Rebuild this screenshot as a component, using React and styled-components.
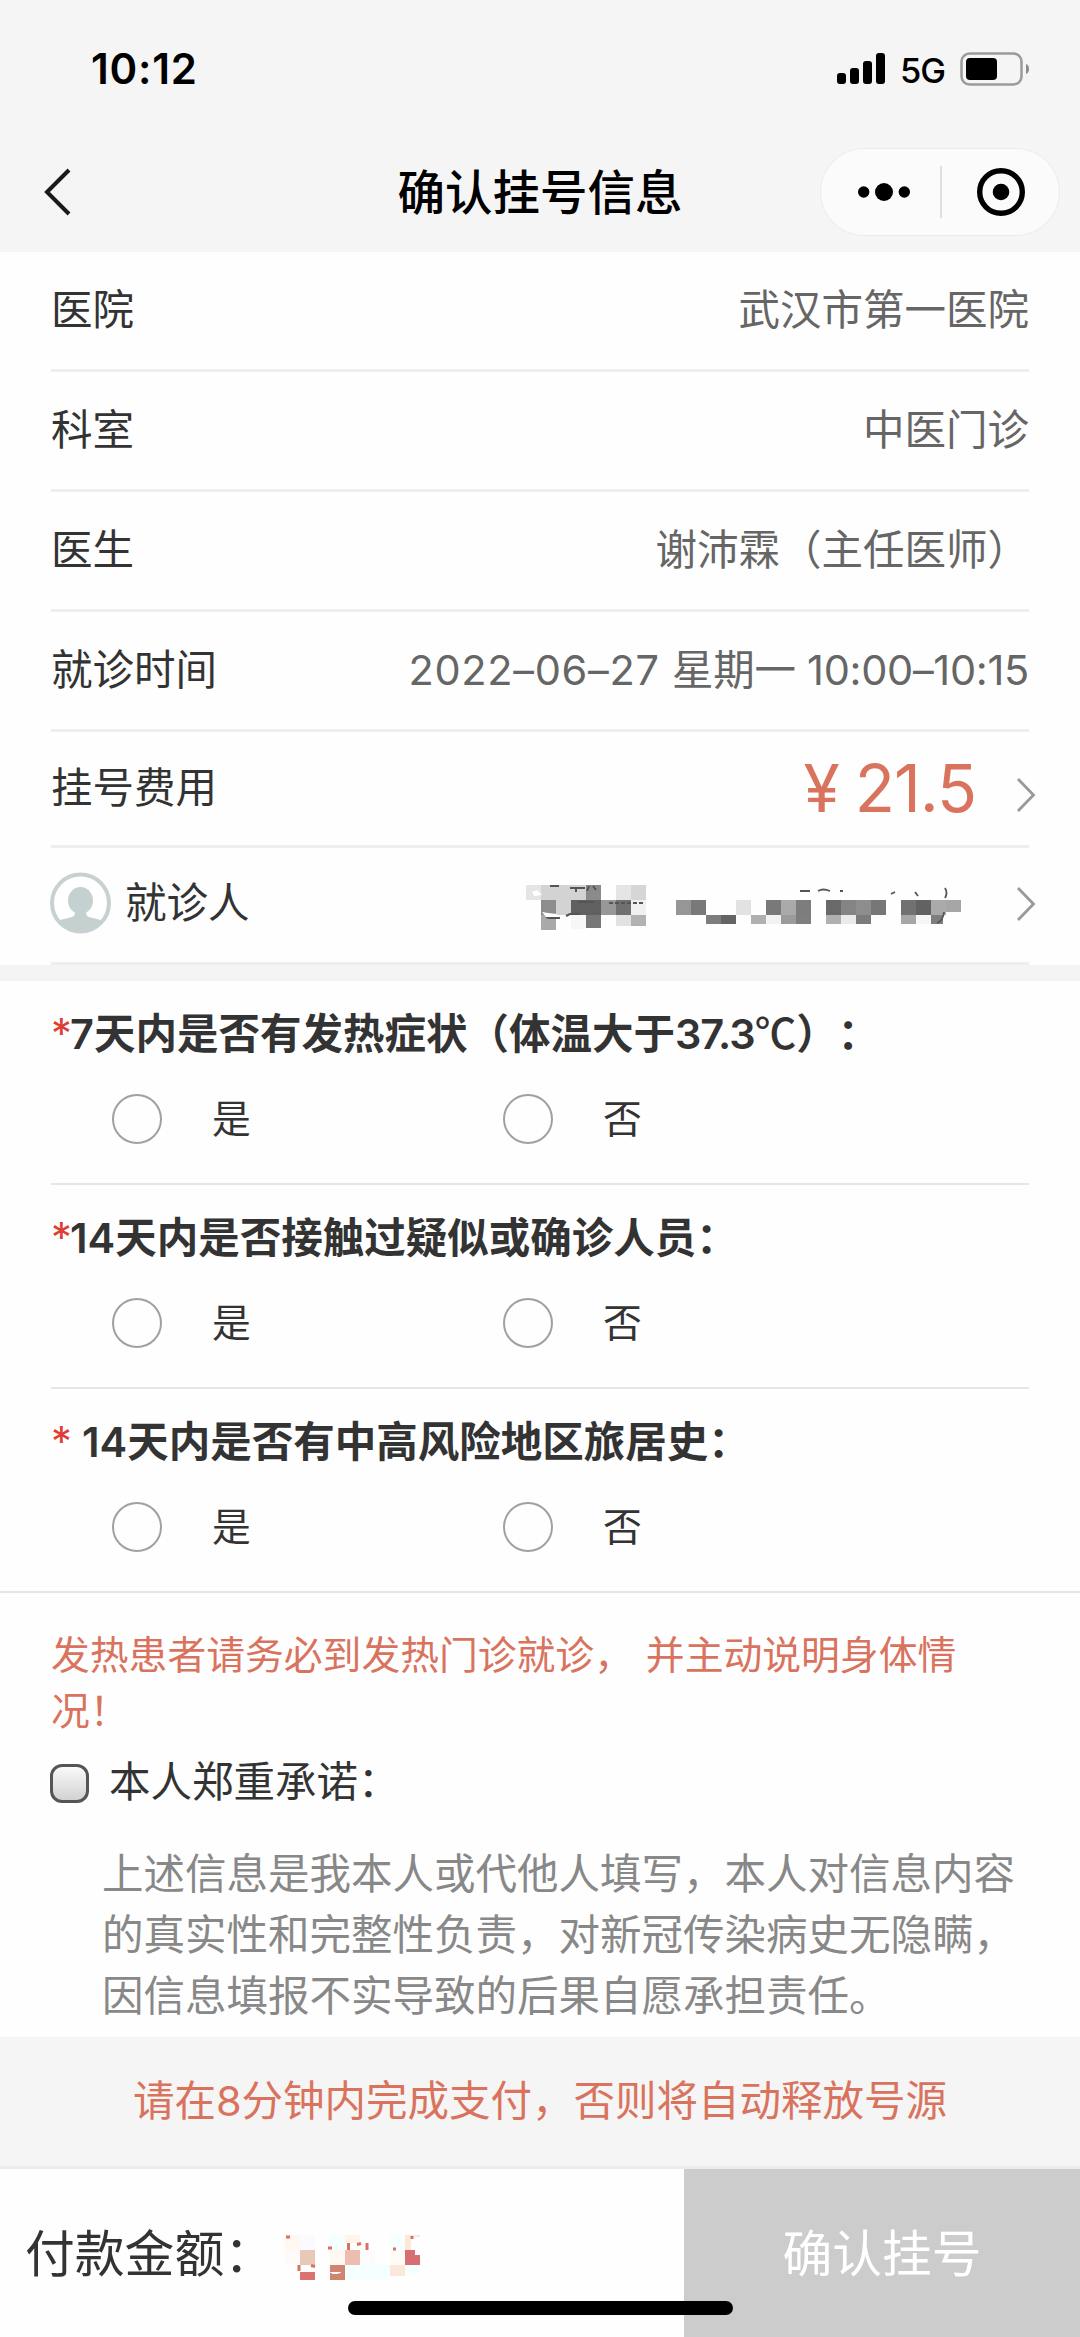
import React from 'react';
import styled, { createGlobalStyle } from 'styled-components';

const GlobalStyle = createGlobalStyle`
  * {
    box-sizing: border-box;
  }

  body {
    margin: 0;
    background: #fff;
    color: #333;
    font-family: Inter, 'Noto Sans CJK SC', sans-serif;
    font-size: 41.5px;
    text-spacing-trim: space-all;
  }
`;

const Page = styled.div`
  width: 1080px;
  height: 2337px;
  display: flex;
  flex-direction: column;
  overflow: hidden;
  background: #fefefe;
`;

const Header = styled.header`
  height: 252px;
  flex: none;
  background: #f5f5f5;
`;

const StatusBar = styled.div`
  height: 137px;
  padding: 0 50px 0 91px;
  display: flex;
  align-items: center;
  justify-content: space-between;
`;

const Clock = styled.span`
  color: #000;
  font-size: 42px;
  font-weight: 600;
  letter-spacing: 0.8px;
`;

const StatusIcons = styled.div`
  display: flex;
  align-items: center;
`;

const Network = styled.span`
  width: 75px;
  margin-top: 3px;
  color: #000;
  font-size: 34.5px;
  font-weight: 450;
  letter-spacing: -1px;
  text-align: center;
`;

const NavBar = styled.div`
  height: 109px;
  padding: 0 20px 0 44px;
  display: grid;
  grid-template-columns: 240px 1fr 240px;
  align-items: center;
`;

const Title = styled.h1`
  margin: 0;
  padding: 0 24px 5px 0;
  color: #000;
  font-size: 47.5px;
  font-weight: 500;
  text-align: center;
  white-space: nowrap;
`;

const Capsule = styled.div`
  width: 240px;
  height: 88px;
  border: 1px solid #ebebeb;
  border-radius: 44px;
  background: #fbfbfb;
  display: grid;
  grid-template-columns: 119px 1px 118px;
  align-items: center;
  justify-items: center;
`;

const MoreDots = styled.svg`
  margin-left: 6px;
`;

const CapsuleDivider = styled.span`
  width: 2px;
  height: 52px;
  background: #e0e0e0;
`;

const Section = styled.section`
  padding: 0 51px;
`;

const Row = styled.div`
  height: ${(props) => props.$height || 120}px;
  padding-bottom: ${(props) => props.$lift || 0}px;
  border-bottom: 3px solid #eee;
  display: flex;
  align-items: center;
  justify-content: space-between;
  line-height: 60px;
  white-space: nowrap;
`;

const Label = styled.span`
  display: flex;
  align-items: center;
  gap: 14px;
`;

const Value = styled.span`
  color: #666;
`;

const DateText = styled.span`
  margin-right: 1px;
  letter-spacing: 0.7px;
`;

const TimeText = styled.span`
  letter-spacing: -0.3px;
`;

const Aside = styled.span`
  display: flex;
  align-items: center;
  margin-right: -7px;
`;

const Price = styled.span`
  display: flex;
  gap: 16px;
  margin-right: 40px;
  color: #d9735d;
  font-size: 66px;
  letter-spacing: -1px;
`;

const Arrow = styled.svg`
  display: block;
  margin-top: ${(props) => props.$top || 0}px;
`;

const Masked = styled.svg`
  display: block;
  margin-top: ${(props) => props.$top || 0}px;
  margin-right: ${(props) => props.$right || 0}px;
`;

const AvatarIcon = styled.svg`
  display: block;
  margin-left: -1px;
`;

const Band = styled.div`
  height: 16px;
  flex: none;
  background: #f4f4f4;
`;

const Question = styled.div`
  height: 204px;
  padding: 19px 0 0;
  margin: 0 ${(props) => (props.$full ? -51 : 0)}px;
  padding-left: ${(props) => (props.$full ? 51 : 0)}px;
  border-bottom: 2px solid #e6e6e6;
`;

const QuestionTitle = styled.div`
  height: 62px;
  display: flex;
  align-items: center;
  font-weight: 600;
  white-space: pre;
`;

const Star = styled.span`
  width: ${(props) => (props.$wide ? 31 : 19)}px;
  padding-top: 3px;
  color: #e03c31;
  font-weight: 400;
`;

const Temperature = styled.span`
  letter-spacing: -1px;
`;

const Unit = styled.span`
  font-family: 'Noto Sans CJK SC', sans-serif;
  font-weight: 500;
`;

const Options = styled.div`
  padding: 32px 0 0 61px;
  display: grid;
  grid-template-columns: 391px 391px;
`;

const Option = styled.label`
  height: 50px;
  display: flex;
  align-items: center;
  gap: 50px;
  font-size: 38.8px;
  line-height: 50px;
`;

const OptionText = styled.span`
  padding-bottom: 1px;
`;

const Radio = styled.span`
  width: 50px;
  height: 50px;
  border: 2px solid #a0a0a0;
  border-radius: 50%;
`;

const Warning = styled.p`
  margin: 34px 0 0;
  color: #d9735d;
  font-size: 38.8px;
  line-height: 55.5px;
  white-space: pre;
  word-spacing: 2px;
`;

const Pledge = styled.label`
  height: 60px;
  margin: 15px 0 0 -1px;
  display: flex;
  align-items: center;
  gap: 20px;
  line-height: 58px;
`;

const PledgeText = styled.span`
  padding-bottom: 3px;
`;

const Checkbox = styled.span`
  width: 39px;
  height: 39px;
  border: 3px solid #555;
  border-radius: 12px;
  background: linear-gradient(#fafafa, #d2d2d2);
`;

const Statement = styled.p`
  margin: 31px 0 0;
  padding-left: 51px;
  color: #888;
  line-height: 61px;
  white-space: pre;
`;

const Notice = styled.div`
  height: 132px;
  margin-top: auto;
  padding-bottom: 8px;
  flex: none;
  border-bottom: 3px solid #ececec;
  background: #f5f5f5;
  color: #d9735d;
  display: flex;
  align-items: center;
  justify-content: center;
`;

const Footer = styled.footer`
  position: relative;
  height: 168px;
  flex: none;
  display: grid;
  grid-template-columns: 684px 1fr;
  font-size: 49.8px;
  line-height: 72px;
`;

const Amount = styled.div`
  padding: 49px 0 0 25px;
  display: flex;
  align-items: flex-start;
  gap: 11px;
`;

const Submit = styled.button`
  padding: 49px 0 0;
  border: 0;
  background: #ccc;
  color: #fff;
  font: inherit;
  display: flex;
  justify-content: center;
  align-items: flex-start;
`;

const HomeIndicator = styled.span`
  position: absolute;
  left: 348px;
  bottom: 22px;
  width: 385px;
  height: 14px;
  border-radius: 7px;
  background: #000;
`;

const details = [
  { label: '医院', value: '武汉市第一医院' },
  { label: '科室', value: '中医门诊' },
  { label: '医生', value: '谢沛霖（主任医师）' },
  {
    label: '就诊时间',
    value: (
      <>
        <DateText>2022–06–27</DateText>
        <TimeText> 星期一 10:00–10:15</TimeText>
      </>
    ),
  },
];

const questions = [
  {
    id: 'fever',
    text: (
      <>
        7天内是否有发热症状（体温大于<Temperature>37.3</Temperature>
        <Unit>℃</Unit>）：
      </>
    ),
  },
  { id: 'contact', text: '14天内是否接触过疑似或确诊人员：' },
  { id: 'travel', text: '14天内是否有中高风险地区旅居史：', wide: true },
];

// [x, y, width, height, color]
const patientBlocks = [
  [0, 0, 15, 15, '#e5e5e5'], [15, 0, 45, 15, '#d3d3d3'], [60, 0, 15, 15, '#8b8b8b'],
  [90, 0, 15, 15, '#e5e5e5'], [105, 0, 15, 15, '#d6d6d6'],
  [15, 15, 15, 15, '#8d8d8d'], [30, 15, 15, 15, '#d3d3d3'], [45, 15, 30, 15, '#606060'],
  [75, 15, 15, 15, '#989898'], [90, 15, 15, 15, '#707070'], [105, 15, 15, 15, '#f0f0f0'],
  [15, 30, 15, 15, '#a9a9a9'], [45, 30, 15, 14, '#f7f7f7'], [60, 30, 15, 13, '#777'],
  [90, 30, 15, 11, '#e2e2e2'], [105, 30, 15, 11, '#b2b2b2'],
  [150, 15, 15, 15, '#969696'], [165, 15, 15, 15, '#797979'], [210, 15, 15, 15, '#e2e2e2'],
  [240, 15, 15, 15, '#797979'], [255, 15, 15, 15, '#aaa'], [270, 15, 15, 15, '#7d7d7d'],
  [300, 15, 15, 15, '#696969'], [315, 15, 15, 15, '#848484'], [330, 15, 15, 15, '#8d8d8d'],
  [345, 15, 15, 15, '#777'], [375, 15, 15, 15, '#717171'], [390, 15, 15, 15, '#626262'],
  [405, 15, 15, 15, '#aaa'], [420, 15, 15, 12, '#a6a6a6'],
  [180, 30, 15, 9, '#7d7d7d'], [195, 30, 15, 9, '#646464'], [225, 30, 15, 9, '#b0b0b0'],
  [240, 30, 15, 9, '#f3f3f3'], [255, 30, 15, 9, '#9b9b9b'], [270, 30, 15, 9, '#7e7e7e'],
  [300, 30, 15, 9, '#b0b0b0'], [315, 30, 15, 9, '#eaeaea'], [330, 30, 15, 9, '#7b7b7b'],
  [375, 30, 15, 9, '#a7a7a7'], [390, 30, 15, 9, '#f6f6f6'], [405, 30, 12, 9, '#7e7e7e'],
];

const amountBlocks = [
  [0, 0, 15, 15, '#fef8f1'], [15, 0, 15, 15, '#fbfbff'], [45, 0, 15, 15, '#f4ffff'],
  [60, 0, 15, 8, '#fef4ea'], [105, 0, 15, 15, '#f6ffff'], [120, 0, 6, 15, '#fde8d8'],
  [126, 0, 9, 2, '#fde8d8'],
  [0, 15, 15, 15, '#fffafa'], [15, 15, 15, 15, '#e8c9b8'], [45, 15, 15, 15, '#fff8f2'],
  [60, 15, 15, 15, '#edbdb0'], [75, 15, 15, 15, '#fcfcff'], [105, 15, 15, 15, '#fffcf7'],
  [120, 15, 10, 5, '#d76f72'], [120, 20, 15, 10, '#d76f72'],
  [60, 30, 45, 15, '#f6ffff'], [105, 30, 15, 11, '#fae9d8'], [120, 30, 15, 8, '#f2ffff'],
  [15, 37, 15, 8, '#d87370'], [45, 30, 15, 15, '#cf8571'],
];

function Blocks({ blocks }) {
  return blocks.map(([x, y, w, h, fill]) => (
    <rect key={`${x}-${y}`} x={x} y={y} width={w} height={h} fill={fill} shapeRendering="crispEdges" />
  ));
}

function Chevron({ top }) {
  return (
    <Arrow $top={top} width="20" height="36" viewBox="0 0 20 36" fill="none">
      <path d="M2 2l15.500 16L2 34" stroke="#999" strokeWidth="2.8" />
    </Arrow>
  );
}

function Avatar() {
  return (
    <AvatarIcon width="61" height="62" viewBox="0 0 61 62">
      <clipPath id="avatar">
        <circle cx="30.5" cy="31" r="29" />
      </clipPath>
      <circle cx="30.5" cy="31" r="28.5" fill="#fff" stroke="#c8d1d1" strokeWidth="4" />
      <g clipPath="url(#avatar)" fill="#c5d1d1">
        <ellipse cx="30.500" cy="28.500" rx="12.500" ry="13.500" />
        <path d="M24 36h13c-1.500 4-1.500 8 2 9 7 2 12 2.500 16 5v12H6V50c4-2.500 9-3 16-5 3.500-1 3.500-5 2-9z" />
      </g>
    </AvatarIcon>
  );
}

function AppHeader() {
  return (
    <Header>
      <StatusBar>
        <Clock>10:12</Clock>
        <StatusIcons>
          <svg width="48" height="32" viewBox="0 0 48 32">
            <rect x="0" y="20" width="9" height="11" rx="3" />
            <rect x="13" y="15" width="9" height="16" rx="3" />
            <rect x="26" y="8" width="9" height="23" rx="3" />
            <rect x="39" y="0" width="9" height="31" rx="3" />
          </svg>
          <Network>5G</Network>
          <svg width="70" height="34" viewBox="0 0 70 34">
            <rect x="1.500" y="1.500" width="60" height="31" rx="8" fill="none" stroke="#9b9b9b" strokeWidth="2.500" />
            <rect x="6" y="6" width="31" height="22" rx="4" />
            <path d="M66 12c4 1 4 9 0 10z" fill="#8b8b8b" />
          </svg>
        </StatusIcons>
      </StatusBar>
      <NavBar>
        <svg width="28" height="48" viewBox="0 0 28 48" fill="none">
          <path d="M25 2L3 24l22 22" stroke="#1a1a1a" strokeWidth="4" />
        </svg>
        <Title>确认挂号信息</Title>
        <Capsule>
          <MoreDots width="54" height="20" viewBox="0 0 54 20">
            <circle cx="6.700" cy="10" r="5.700" />
            <circle cx="27" cy="10" r="9" />
            <circle cx="47.300" cy="10" r="5.700" />
          </MoreDots>
          <CapsuleDivider />
          <svg width="50" height="50" viewBox="0 0 50 50">
            <circle cx="26" cy="25" r="21.300" fill="none" stroke="#000" strokeWidth="5.400" />
            <circle cx="26" cy="25" r="8.300" />
          </svg>
        </Capsule>
      </NavBar>
    </Header>
  );
}

function App() {
  return (
    <Page>
      <GlobalStyle />
      <AppHeader />
      <Section>
        {details.map((item) => (
          <Row key={item.label} $lift={1}>
            <Label>{item.label}</Label>
            <Value>{item.value}</Value>
          </Row>
        ))}
        <Row $height={116} $lift={2}>
          <Label>挂号费用</Label>
          <Aside>
            <Price>
              <span>¥</span>
              <span>21.5</span>
            </Price>
            <Chevron top={14} />
          </Aside>
        </Row>
        <Row $height={117} $lift={4}>
          <Label>
            <Avatar />
            就诊人
          </Label>
          <Aside>
            <Masked $top={8} $right={55} width="435" height="45" viewBox="0 0 435 45">
              <Blocks blocks={patientBlocks} />
              <g fill="none" stroke="#555" strokeWidth="2">
                <path d="M24 1h9M44 3h15M50 4v3M61 6l2-5M67 1l3 4M52 17h16M20 32l3 1h11M40 31l4-2h10" />
                <path d="M83 18h36" strokeDasharray="4 2" />
              </g>
              <path d="M16 27l6 1 9 1-1 3h-10z" fill="#fff" />
              <path d="M6 7l5-2 5 5-8 1z" fill="#fff" />
              <g fill="none" stroke="#555" strokeWidth="1.8">
                <path d="M274 6h10M292 6q5-3 12 0M314 6h3M365 9l4-2M389 7l3 4M419 3q3 5 0 10M418 27q-1 9-7 11" />
              </g>
            </Masked>
            <Chevron top={2} />
          </Aside>
        </Row>
      </Section>
      <Band />
      <Section>
        {questions.map((question, index) => (
          <Question key={question.id} $full={index === questions.length - 1}>
            <QuestionTitle>
              <Star $wide={question.wide}>*</Star>
              <span>{question.text}</span>
            </QuestionTitle>
            <Options>
              <Option>
                <Radio />
                <OptionText>是</OptionText>
              </Option>
              <Option>
                <Radio />
                <OptionText>否</OptionText>
              </Option>
            </Options>
          </Question>
        ))}
        <Warning>{'发热患者请务必到发热门诊就诊， 并主动说明身体情\n况！'}</Warning>
        <Pledge>
          <Checkbox />
          <PledgeText>本人郑重承诺：</PledgeText>
        </Pledge>
        <Statement>
          {'上述信息是我本人或代他人填写，本人对信息内容\n的真实性和完整性负责，对新冠传染病史无隐瞒，\n因信息填报不实导致的后果自愿承担责任。'}
        </Statement>
      </Section>
      <Notice>请在8分钟内完成支付，否则将自动释放号源</Notice>
      <Footer>
        <Amount>
          付款金额：
          <Masked $top={17} width="150" height="45" viewBox="0 0 150 45">
            <Blocks blocks={amountBlocks} />
            <g fill="none" stroke="#d9735d" strokeWidth="3">
              <path d="M1 2h4M43 13h4M63.500 8v7M72 9.500l4-1M82 8v7M108 14h3M127 1v3M14 30v6M26 30.500l4 1" />
            </g>
            <path d="M44 37l12 0q0 2-8 2z" fill="#fff" />
          </Masked>
        </Amount>
        <Submit>确认挂号</Submit>
        <HomeIndicator />
      </Footer>
    </Page>
  );
}

export default App;
